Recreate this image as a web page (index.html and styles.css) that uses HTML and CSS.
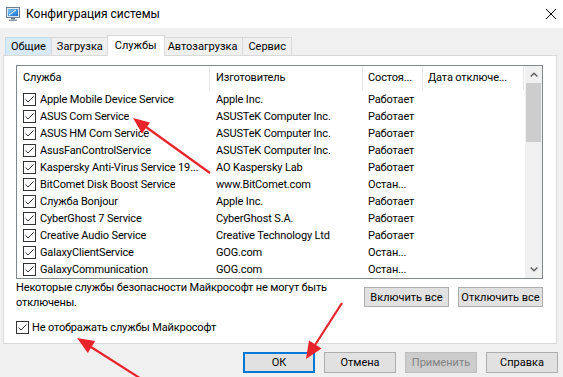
FILE: index.html
```html
<!DOCTYPE html>
<html>

<head>
    <meta charset="utf-8">
    <link rel="stylesheet" href="styles.css">
</head>

<body>

    <div class="window">
        <div class="titlebar">
            <svg class="app-icon" viewBox="0 0 16 16">
                <defs>
                    <linearGradient id="scr" x1="0" y1="0" x2="1" y2="1">
                        <stop offset="0" stop-color="#7cc4f5" />
                        <stop offset="1" stop-color="#1c6fd0" />
                    </linearGradient>
                </defs>
                <rect x="1.5" y="1.5" width="13" height="10" fill="#dfe6ee" stroke="#6f7f93" />
                <rect x="3" y="3" width="10" height="7" fill="url(#scr)" />
                <path d="M4 9 L11 4" stroke="#fff" stroke-width="1" />
                <rect x="6" y="12" width="4" height="1.5" fill="#6f7f93" />
                <rect x="4" y="13.5" width="8" height="1.5" fill="#8e9cad" />
            </svg>
            <span class="title">Конфигурация системы</span>
            <svg class="close" viewBox="0 0 10 10">
                <path d="M0 0 L10 10 M10 0 L0 10" stroke="#000" stroke-width="1" />
            </svg>
        </div>

        <div class="tabs">
            <div class="tab hover">Общие</div>
            <div class="tab">Загрузка</div>
            <div class="tab active">Службы</div>
            <div class="tab">Автозагрузка</div>
            <div class="tab">Сервис</div>
        </div>

        <div class="panel">
            <div class="listview">
                <div class="list-main">
                    <div class="list-header">
                        <div class="cell c-name">Служба</div>
                        <div class="cell c-maker">Изготовитель</div>
                        <div class="cell c-state">Состоя...</div>
                        <div class="cell c-date">Дата отключе...</div>
                    </div>
                    <div class="rows">
                        <div class="row">
                            <div class="cell c-name"><svg class="check" viewBox="0 0 13 13"><rect x="0.5" y="0.5" width="12" height="12" fill="#fff" stroke="#333" /><path d="M2.5 6.5 L5 9 L10.5 3.5" fill="none" stroke="#333" /></svg><span class="label">Apple Mobile Device Service</span></div>
                            <div class="cell c-maker">Apple Inc.</div>
                            <div class="cell c-state">Работает</div>
                            <div class="cell c-date"></div>
                        </div>
                        <div class="row">
                            <div class="cell c-name"><svg class="check" viewBox="0 0 13 13"><rect x="0.5" y="0.5" width="12" height="12" fill="#fff" stroke="#333" /><path d="M2.5 6.5 L5 9 L10.5 3.5" fill="none" stroke="#333" /></svg><span class="label">ASUS Com Service</span></div>
                            <div class="cell c-maker">ASUSTeK Computer Inc.</div>
                            <div class="cell c-state">Работает</div>
                            <div class="cell c-date"></div>
                        </div>
                        <div class="row">
                            <div class="cell c-name"><svg class="check" viewBox="0 0 13 13"><rect x="0.5" y="0.5" width="12" height="12" fill="#fff" stroke="#333" /><path d="M2.5 6.5 L5 9 L10.5 3.5" fill="none" stroke="#333" /></svg><span class="label">ASUS HM Com Service</span></div>
                            <div class="cell c-maker">ASUSTeK Computer Inc.</div>
                            <div class="cell c-state">Работает</div>
                            <div class="cell c-date"></div>
                        </div>
                        <div class="row">
                            <div class="cell c-name"><svg class="check" viewBox="0 0 13 13"><rect x="0.5" y="0.5" width="12" height="12" fill="#fff" stroke="#333" /><path d="M2.5 6.5 L5 9 L10.5 3.5" fill="none" stroke="#333" /></svg><span class="label">AsusFanControlService</span></div>
                            <div class="cell c-maker">ASUSTeK Computer Inc.</div>
                            <div class="cell c-state">Работает</div>
                            <div class="cell c-date"></div>
                        </div>
                        <div class="row">
                            <div class="cell c-name"><svg class="check" viewBox="0 0 13 13"><rect x="0.5" y="0.5" width="12" height="12" fill="#fff" stroke="#333" /><path d="M2.5 6.5 L5 9 L10.5 3.5" fill="none" stroke="#333" /></svg><span class="label">Kaspersky Anti-Virus Service 19...</span></div>
                            <div class="cell c-maker">AO Kaspersky Lab</div>
                            <div class="cell c-state">Работает</div>
                            <div class="cell c-date"></div>
                        </div>
                        <div class="row">
                            <div class="cell c-name"><svg class="check" viewBox="0 0 13 13"><rect x="0.5" y="0.5" width="12" height="12" fill="#fff" stroke="#333" /><path d="M2.5 6.5 L5 9 L10.5 3.5" fill="none" stroke="#333" /></svg><span class="label">BitComet Disk Boost Service</span></div>
                            <div class="cell c-maker">www.BitComet.com</div>
                            <div class="cell c-state">Остан...</div>
                            <div class="cell c-date"></div>
                        </div>
                        <div class="row">
                            <div class="cell c-name"><svg class="check" viewBox="0 0 13 13"><rect x="0.5" y="0.5" width="12" height="12" fill="#fff" stroke="#333" /><path d="M2.5 6.5 L5 9 L10.5 3.5" fill="none" stroke="#333" /></svg><span class="label">Служба Bonjour</span></div>
                            <div class="cell c-maker">Apple Inc.</div>
                            <div class="cell c-state">Работает</div>
                            <div class="cell c-date"></div>
                        </div>
                        <div class="row">
                            <div class="cell c-name"><svg class="check" viewBox="0 0 13 13"><rect x="0.5" y="0.5" width="12" height="12" fill="#fff" stroke="#333" /><path d="M2.5 6.5 L5 9 L10.5 3.5" fill="none" stroke="#333" /></svg><span class="label">CyberGhost 7 Service</span></div>
                            <div class="cell c-maker">CyberGhost S.A.</div>
                            <div class="cell c-state">Работает</div>
                            <div class="cell c-date"></div>
                        </div>
                        <div class="row">
                            <div class="cell c-name"><svg class="check" viewBox="0 0 13 13"><rect x="0.5" y="0.5" width="12" height="12" fill="#fff" stroke="#333" /><path d="M2.5 6.5 L5 9 L10.5 3.5" fill="none" stroke="#333" /></svg><span class="label">Creative Audio Service</span></div>
                            <div class="cell c-maker">Creative Technology Ltd</div>
                            <div class="cell c-state">Работает</div>
                            <div class="cell c-date"></div>
                        </div>
                        <div class="row">
                            <div class="cell c-name"><svg class="check" viewBox="0 0 13 13"><rect x="0.5" y="0.5" width="12" height="12" fill="#fff" stroke="#333" /><path d="M2.5 6.5 L5 9 L10.5 3.5" fill="none" stroke="#333" /></svg><span class="label">GalaxyClientService</span></div>
                            <div class="cell c-maker">GOG.com</div>
                            <div class="cell c-state">Остан...</div>
                            <div class="cell c-date"></div>
                        </div>
                        <div class="row">
                            <div class="cell c-name"><svg class="check" viewBox="0 0 13 13"><rect x="0.5" y="0.5" width="12" height="12" fill="#fff" stroke="#333" /><path d="M2.5 6.5 L5 9 L10.5 3.5" fill="none" stroke="#333" /></svg><span class="label">GalaxyCommunication</span></div>
                            <div class="cell c-maker">GOG.com</div>
                            <div class="cell c-state">Остан...</div>
                            <div class="cell c-date"></div>
                        </div>
                    </div>
                </div>

                <div class="scrollbar">
                    <div class="scroll-btn">
                        <svg viewBox="0 0 8 5" width="8" height="5"><polyline points="0.7,4.5 4,1.2 7.3,4.5" fill="none" stroke="#606060" stroke-width="1.5" /></svg>
                    </div>
                    <div class="scroll-thumb"></div>
                    <div class="scroll-track"></div>
                    <div class="scroll-btn">
                        <svg viewBox="0 0 8 5" width="8" height="5"><polyline points="0.7,0.5 4,3.8 7.3,0.5" fill="none" stroke="#606060" stroke-width="1.5" /></svg>
                    </div>
                </div>
            </div>

            <div class="below">
                <p class="note">Некоторые службы безопасности Майкрософт не могут быть<br>отключены.</p>
                <div class="side-buttons">
                    <button class="btn">Включить все</button>
                    <button class="btn">Отключить все</button>
                </div>
            </div>

            <label class="hide-ms"><svg class="check" viewBox="0 0 13 13"><rect x="0.5" y="0.5" width="12" height="12" fill="#fff" stroke="#333" /><path d="M2.5 6.5 L5 9 L10.5 3.5" fill="none" stroke="#333" /></svg>Не отображать службы Майкрософт</label>
        </div>

        <div class="footer">
            <button class="btn default">ОК</button>
            <button class="btn">Отмена</button>
            <button class="btn" disabled>Применить</button>
            <button class="btn">Справка</button>
        </div>

        <!-- red annotation arrows drawn over the dialog -->
        <svg class="arrows" viewBox="0 0 563 377">
            <g stroke="#e8232a" stroke-width="2.2" fill="#e8232a">
                <line x1="210" y1="173" x2="146" y2="127" />
                <polygon points="133,118 150,122.5 142,133.5" stroke="none" />
                <line x1="146" y1="382" x2="91" y2="347" />
                <polygon points="77,338 95.2,341 87.8,353" stroke="none" />
                <line x1="342" y1="303" x2="315" y2="345" />
                <polygon points="306,359 321.5,348.5 309,340.5" stroke="none" />
            </g>
        </svg>
    </div>

</body>

</html>
```

FILE: styles.css
```css
* {
    box-sizing: border-box;
}

body {
    margin: 0;
    width: 563px;
    height: 377px;
    overflow: hidden;
    background-color: #f0f0f0;
    font-family: Roboto, "Liberation Sans", sans-serif;
    font-size: 11px;
    letter-spacing: -0.15px;
    color: #000;
}

.window {
    position: relative;
    height: 377px;
}

/* Title bar */
.titlebar {
    height: 28px;
    background-color: #ffffff;
    display: flex;
    align-items: center;
    padding: 0 7px 0 5px;
}

.app-icon {
    width: 16px;
    height: 16px;
    margin-right: 5px;
}

.title {
    flex: 1;
    font-size: 12px;
    letter-spacing: 0;
}

.close {
    width: 10px;
    height: 10px;
}

/* Tabs */
.tabs {
    display: flex;
    align-items: flex-end;
    height: 27px;
    padding-left: 5px;
    letter-spacing: 0;
}

.tab {
    height: 18px;
    padding: 0 5px;
    margin-left: -1px;
    border: 1px solid #d9d9d9;
    border-bottom: none;
    background-color: #f0f0f0;
    line-height: 17px;
}

.tab:first-child {
    margin-left: 0;
}

.tab.hover {
    background-color: #d8eaf9;
    border-color: #c0dcf3;
}

.tab.active {
    position: relative;
    z-index: 1;
    height: 21px;
    margin: 0 -2px -1px -2px;
    padding: 0 7px;
    background-color: #ffffff;
    line-height: 19px;
}

/* Main panel */
.panel {
    margin: 0 6px 0 3px;
    padding: 9px 13px 8px 12px;
    background-color: #ffffff;
    border: 1px solid #d9d9d9;
}

.listview {
    display: flex;
    border: 1px solid #828790;
}

.list-main {
    width: 508px;
}

.list-header {
    display: flex;
    height: 24px;
}

.list-header .cell {
    border-right: 1px solid #e5e5e5;
    line-height: 23px;
}

.rows {
    padding-top: 1px;
}

.row {
    display: flex;
    height: 17px;
    line-height: 18px;
}

.cell {
    white-space: nowrap;
    overflow: hidden;
    text-overflow: ellipsis;
}

.c-name {
    width: 193px;
    padding-left: 6px;
    padding-right: 4px;
}

.row .c-name {
    display: flex;
    align-items: center;
    gap: 4px;
}

.label {
    overflow: hidden;
    text-overflow: ellipsis;
}

.c-maker {
    width: 153px;
    padding-left: 6px;
}

.c-state {
    width: 60px;
    padding-left: 5px;
}

.c-date {
    width: 101px;
    padding-left: 5px;
}

.check {
    flex: none;
    width: 13px;
    height: 13px;
}

/* Scrollbar */
.scrollbar {
    width: 17px;
    display: flex;
    flex-direction: column;
    background-color: #f0f0f0;
}

.scroll-btn {
    height: 17px;
    display: flex;
    align-items: center;
    justify-content: center;
}

.scroll-thumb {
    height: 59px;
    margin: 0 1px;
    background-color: #cdcdcd;
}

.scroll-track {
    flex: 1;
}

/* Under the list */
.below {
    display: flex;
    justify-content: space-between;
}

.note {
    margin: 1px 0 0;
    line-height: 15px;
}

.side-buttons {
    display: flex;
    gap: 9px;
    margin-top: 8px;
}

.btn {
    height: 20px;
    padding: 0;
    border: 1px solid #adadad;
    background-color: #e1e1e1;
    font: inherit;
    color: #000;
}

.side-buttons .btn {
    width: 85px;
}

.hide-ms {
    display: flex;
    align-items: center;
    gap: 3px;
    height: 15px;
    margin-top: 10px;
}

/* Dialog buttons */
.footer {
    display: flex;
    justify-content: flex-end;
    gap: 9px;
    padding: 8px 5px 0 0;
}

.footer .btn {
    width: 72px;
    height: 21px;
}

.btn.default {
    border: 2px solid #0078d7;
}

.btn:disabled {
    background-color: #cccccc;
    border-color: #bfbfbf;
    color: #838383;
}

/* Annotation overlay */
.arrows {
    position: absolute;
    top: 0;
    left: 0;
    width: 563px;
    height: 377px;
    pointer-events: none;
}
```
